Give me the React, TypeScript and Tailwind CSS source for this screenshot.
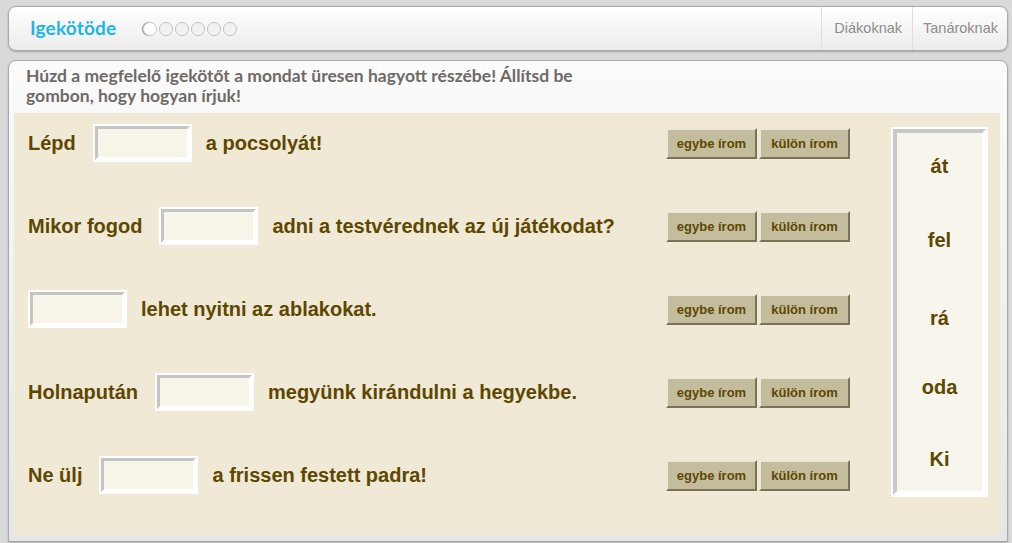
const rows = [
  { before: 'Lépd', after: 'a pocsolyát!' },
  { before: 'Mikor fogod', after: 'adni a testvérednek az új játékodat?' },
  { before: '', after: 'lehet nyitni az ablakokat.' },
  { before: 'Holnapután', after: 'megyünk kirándulni a hegyekbe.' },
  { before: 'Ne ülj', after: 'a frissen festett padra!' },
];

const words = [
  { text: 'át', cls: 'mt-[13px]' },
  { text: 'fel', cls: 'mt-[34px]' },
  { text: 'rá', cls: 'mt-[38px]' },
  { text: 'oda', cls: 'mt-[29px]' },
  { text: 'Ki', cls: 'mt-[32px]' },
];

function Slot() {
  return (
    <div className="h-[38px] w-[99px] shrink-0 border-2 border-white bg-white">
      <div className="h-full w-full border-[3px] border-t-[#c4c4c4] border-l-[#c4c4c4] border-b-white border-r-white bg-[#f7f4e8]" />
    </div>
  );
}

function ModeButton({ label }: { label: string }) {
  return (
    <button className="h-[31px] w-[91px] border-2 border-t-[#ebe8da] border-l-[#ebe8da] border-b-[#7a7356] border-r-[#7a7356] bg-[#c3bd9d] text-[13px] font-bold text-[#5e4700] font-['Liberation_Sans',Arial,sans-serif]">
      {label}
    </button>
  );
}

export default function App() {
  return (
    <div className="min-h-[543px] w-[1012px] bg-[#d9d9d9] pl-[8px] pr-[4px] pt-[6px] font-['Liberation_Sans',Arial,sans-serif]">
      <header className="flex h-[45px] items-center rounded-[8px] border border-[#a8a8a8] bg-gradient-to-b from-white to-[#ececec] shadow-[0_1px_2px_rgba(0,0,0,0.25)]">
        <h1 className="ml-[21px] text-[19px] font-bold tracking-[0.2px] text-[#1fb4ea] font-['Lato',sans-serif]">Igekötöde</h1>
        <div className="ml-[27px] flex gap-[2px]">
          {[0, 1, 2, 3, 4, 5].map((i) => (
            <span
              key={i}
              className={
                i === 0
                  ? 'h-[14px] w-[14px] rounded-full border border-[#cfcfcf] bg-white shadow-[-1px_0_1px_rgba(0,0,0,0.4)]'
                  : 'h-[14px] w-[14px] rounded-full border border-[#c2c2c2] bg-[#f2f2f2]'
              }
            />
          ))}
        </div>
        <nav className="ml-auto flex h-full text-[14.5px] text-[#8d8d8d]">
          <a className="flex items-center border-l border-[#dedede] pl-[12px] pr-[10px]">Diákoknak</a>
          <a className="flex items-center border-l border-[#dedede] pl-[10px] pr-[9px]">Tanároknak</a>
        </nav>
      </header>

      <main className="mt-[9px] h-[482px] rounded-t-[8px] border border-[#a8a8a8] bg-gradient-to-b from-[#fbfbfb] to-[#e6e6e6] pl-[5px] pr-[7px] shadow-[0_1px_2px_rgba(0,0,0,0.2)]">
        <p className="h-[52px] px-[12px] pt-[5px] text-[17.5px] font-bold leading-[20px] text-[#6e6a66] font-['Lato',sans-serif]">
          Húzd a megfelelő igekötőt a mondat üresen hagyott részébe! Állítsd be
          <br />
          gombon, hogy hogyan írjuk!
        </p>
        <section className="flex h-[422px] bg-[#f0e9d6] pl-[14px] pr-[12px] pt-[11px]">
          <div className="flex flex-1 flex-col">
            {rows.map((r, i) => (
              <div key={i} className="flex h-[83px] shrink-0 items-start">
                <div className="flex h-[38px] flex-1 items-center text-[20px] font-bold text-[#5e4700]">
                  {r.before && <span className="mr-[17px]">{r.before}</span>}
                  <Slot />
                  <span className="ml-[14px]">{r.after}</span>
                </div>
                <div className="mr-[41px] mt-[4px] flex gap-[2px]">
                  <ModeButton label="egybe írom" />
                  <ModeButton label="külön írom" />
                </div>
              </div>
            ))}
          </div>
          <div className="mt-[3px] h-[370px] w-[97px] border-2 border-white bg-white">
            <div className="flex h-full w-full flex-col border-[4px] border-t-[#c8c8c8] border-l-[#c8c8c8] border-b-white border-r-white bg-[#f8f6ec]">
              {words.map((w) => (
                <div key={w.text} className={`${w.cls} flex h-[40px] items-center justify-center text-[20px] font-bold text-[#5e4700]`}>
                  {w.text}
                </div>
              ))}
            </div>
          </div>
        </section>
      </main>
    </div>
  );
}
